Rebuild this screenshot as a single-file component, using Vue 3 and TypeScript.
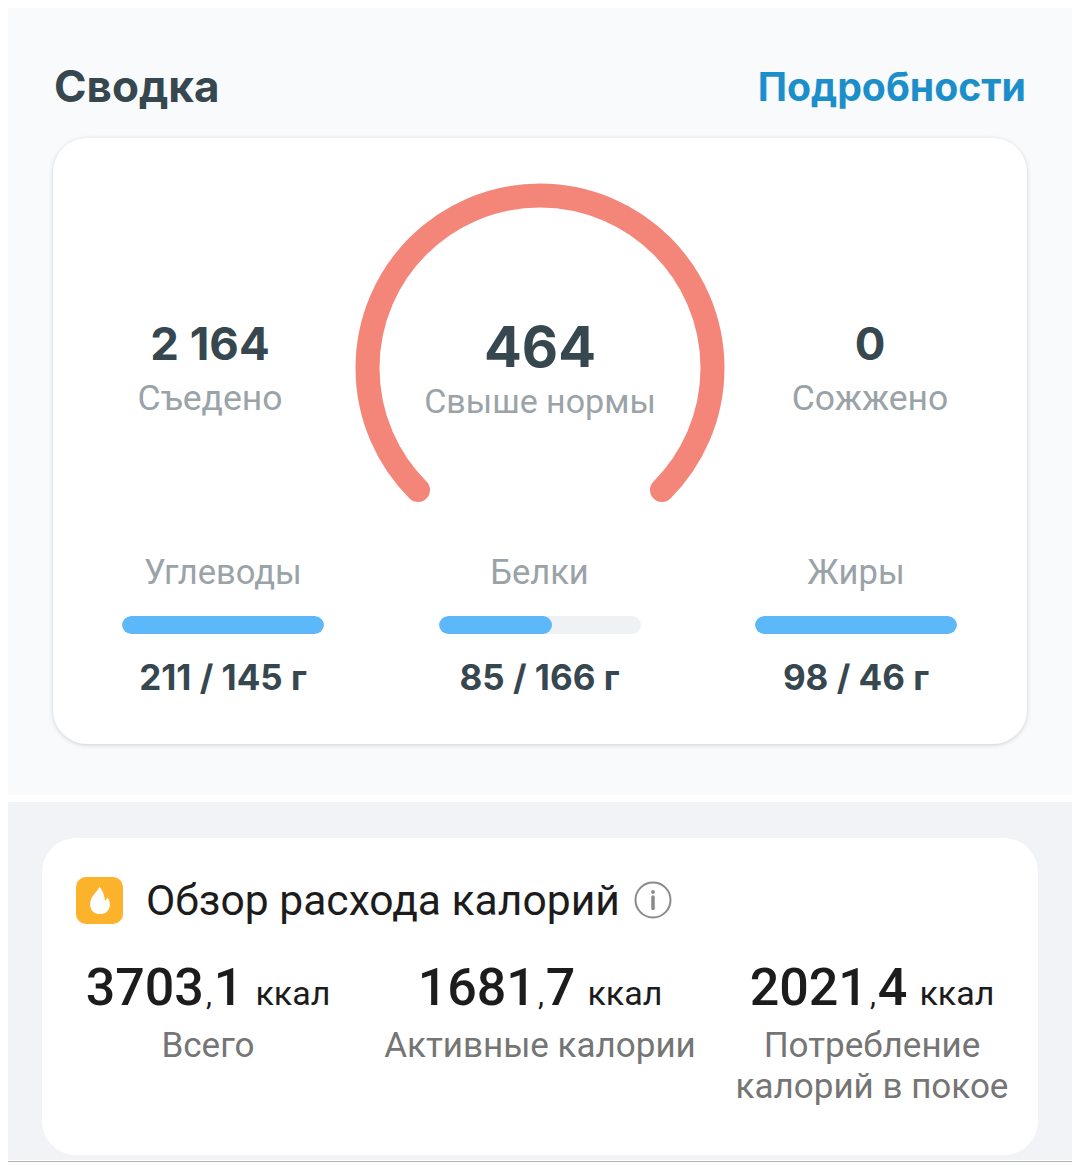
<template>
  <div class="page">
    <section class="summary">
      <header class="summary-head">
        <h2>Сводка</h2>
        <a class="more">Подробности</a>
      </header>
      <div class="card">
        <div class="top-row">
          <div class="stat">
            <div class="stat-value">2 164</div>
            <div class="stat-label">Съедено</div>
          </div>
          <div class="gauge">
            <svg width="370" height="330" viewBox="0 0 370 330" fill="none">
              <path d="M63 307 A172.5 172.5 0 1 1 307 307" stroke="#f48679" stroke-width="24" stroke-linecap="round"/>
            </svg>
            <div class="gauge-text">
              <div class="gauge-value">464</div>
              <div class="gauge-label">Свыше нормы</div>
            </div>
          </div>
          <div class="stat">
            <div class="stat-value">0</div>
            <div class="stat-label">Сожжено</div>
          </div>
        </div>
        <div class="macros">
          <div v-for="m in macros" :key="m.name" class="macro">
            <div class="macro-name">{{ m.name }}</div>
            <div class="bar"><div class="bar-fill" :style="{ width: m.pct + '%' }"></div></div>
            <div class="macro-value">{{ m.value }}</div>
          </div>
        </div>
      </div>
    </section>

    <section class="burn">
      <div class="burn-card">
        <div class="burn-title">
          <span class="flame">
            <svg width="22" height="27" viewBox="3 2 20 26">
              <path d="M12.5 2 C10 7 3.5 11 3.5 19 C3.5 24.5 7.7 28 13 28 C18.3 28 22.5 24.5 22.5 19 C22.5 16 21.5 13.5 20 12 C19.5 13.5 18.5 14.5 17.5 15 C17.5 10 15.5 5 12.5 2 Z" fill="#fff"/>
            </svg>
          </span>
          <span class="burn-text">Обзор расхода калорий</span>
          <svg class="info" width="38" height="38" viewBox="0 0 38 38" fill="none">
            <circle cx="19" cy="19" r="17.5" stroke="#8a8a8a" stroke-width="2"/>
            <circle cx="19" cy="11" r="1.9" fill="#8a8a8a"/>
            <path d="M19 16V27.5" stroke="#8a8a8a" stroke-width="3.5" stroke-linecap="round"/>
          </svg>
        </div>
        <div class="burn-stats">
          <div v-for="b in burns" :key="b.whole" class="burn-stat">
            <div class="burn-value"><span class="num">{{ b.whole }}</span><span class="comma">,</span><span class="num">{{ b.frac }}</span><span class="unit">ккал</span></div>
            <div class="burn-label">
              <template v-for="(line, i) in b.label" :key="i">{{ line }}<br /></template>
            </div>
          </div>
        </div>
      </div>
    </section>
    <div class="rule"></div>
  </div>
</template>

<script setup lang="ts">
const macros = [
  { name: 'Углеводы', pct: 100, value: '211 / 145 г' },
  { name: 'Белки', pct: 56, value: '85 / 166 г' },
  { name: 'Жиры', pct: 100, value: '98 / 46 г' }
];

const burns = [
  { whole: '3703', frac: '1', label: ['Всего'] },
  { whole: '1681', frac: '7', label: ['Активные калории'] },
  { whole: '2021', frac: '4', label: ['Потребление', 'калорий в покое'] }
];
</script>

<style>
html, body {
  background: #fff;
}
</style>

<style scoped>
.page {
  width: 1080px;
  height: 1170px;
  padding-top: 8px;
  box-sizing: border-box;
  font-family: Roboto, "Noto Sans", sans-serif;
  overflow: hidden;
}

.summary {
  margin: 0 8px;
  height: 787px;
  box-sizing: border-box;
  background: #f8fafb;
  padding: 0 45px;
}

.summary-head {
  height: 130px;
  padding: 26px 1px 0;
  box-sizing: border-box;
  display: flex;
  justify-content: space-between;
  align-items: center;
  font-family: Inter, sans-serif;
}

.summary-head h2 {
  margin: 0;
  font-size: 44px;
  font-weight: 700;
  color: #36474f;
}

.more {
  font-size: 39.2px;
  font-weight: 700;
  color: #1c8fcb;
}

.card {
  height: 606px;
  background: #fff;
  border-radius: 34px;
  box-shadow: 0 1px 4px rgba(60, 70, 80, 0.22);
  box-sizing: border-box;
  padding-top: 45px;
}

.top-row {
  display: grid;
  grid-template-columns: 1fr 370px 1fr;
  height: 330px;
}

.stat {
  display: flex;
  flex-direction: column;
  align-items: center;
  padding-top: 134px;
}

.stat:first-child {
  padding-left: 12px;
}

.stat:last-child {
  padding-right: 12px;
}

.stat-value {
  font-family: Inter, sans-serif;
  font-size: 45.5px;
  line-height: 54px;
  font-weight: 700;
  color: #36474f;
}

.stat-label {
  font-size: 35.5px;
  line-height: 54px;
  color: #9aa3a8;
}

.gauge {
  position: relative;
  width: 370px;
  height: 330px;
}

.gauge-text {
  position: absolute;
  top: 133px;
  left: 0;
  right: 0;
  text-align: center;
}

.gauge-value {
  font-family: Inter, sans-serif;
  font-size: 56px;
  line-height: 62px;
  font-weight: 700;
  color: #36474f;
}

.gauge-label {
  font-size: 34px;
  line-height: 46px;
  color: #9aa3a8;
}

.macros {
  display: grid;
  grid-template-columns: repeat(3, 202px);
  justify-content: space-between;
  padding: 0 70px 0 69px;
  margin-top: 39px;
}

.macro {
  display: flex;
  flex-direction: column;
  align-items: center;
}

.macro-name {
  font-size: 34.5px;
  line-height: 40px;
  color: #9aa3a8;
}

.bar {
  width: 100%;
  height: 18px;
  margin-top: 24px;
  border-radius: 9px;
  background: #eff2f4;
  overflow: hidden;
}

.bar-fill {
  height: 100%;
  border-radius: 9px;
  background: #5cb8f8;
}

.macro-value {
  margin-top: 23px;
  font-family: Inter, sans-serif;
  font-size: 35px;
  line-height: 40px;
  font-weight: 700;
  color: #36474f;
}

.burn {
  margin: 7px 8px 0;
  height: 358px;
  box-sizing: border-box;
  background: #f1f3f7;
  padding: 36px 34px 0;
}

.burn-card {
  height: 317px;
  background: #fff;
  border-radius: 34px;
  box-sizing: border-box;
  padding-top: 38px;
}

.burn-title {
  display: flex;
  align-items: center;
  height: 48px;
  padding-left: 34px;
}

.flame {
  width: 47px;
  height: 47px;
  border-radius: 10px;
  background: #fdb22c;
  display: flex;
  align-items: center;
  justify-content: center;
}

.burn-text {
  margin-left: 23px;
  font-size: 42.6px;
  color: #1c1c1c;
}

.info {
  margin-left: 14px;
}

.burn-stats {
  display: grid;
  grid-template-columns: 1fr 1fr 1fr;
  margin-top: 31px;
}

.burn-stat {
  display: flex;
  flex-direction: column;
  align-items: center;
}

.burn-value {
  height: 66px;
  display: flex;
  align-items: baseline;
  color: #1c1c1c;
}

.num {
  font-size: 52px;
  font-weight: 500;
  line-height: 66px;
}

.comma {
  font-size: 30px;
  margin: 0 2px;
}

.unit {
  margin-left: 12px;
  font-size: 34px;
}

.burn-label {
  margin-top: 4px;
  font-size: 35px;
  line-height: 41px;
  text-align: center;
  color: #757575;
  white-space: nowrap;
}

.rule {
  margin: 1px 8px 0;
  height: 1px;
  background: #b5b5b5;
}
</style>
